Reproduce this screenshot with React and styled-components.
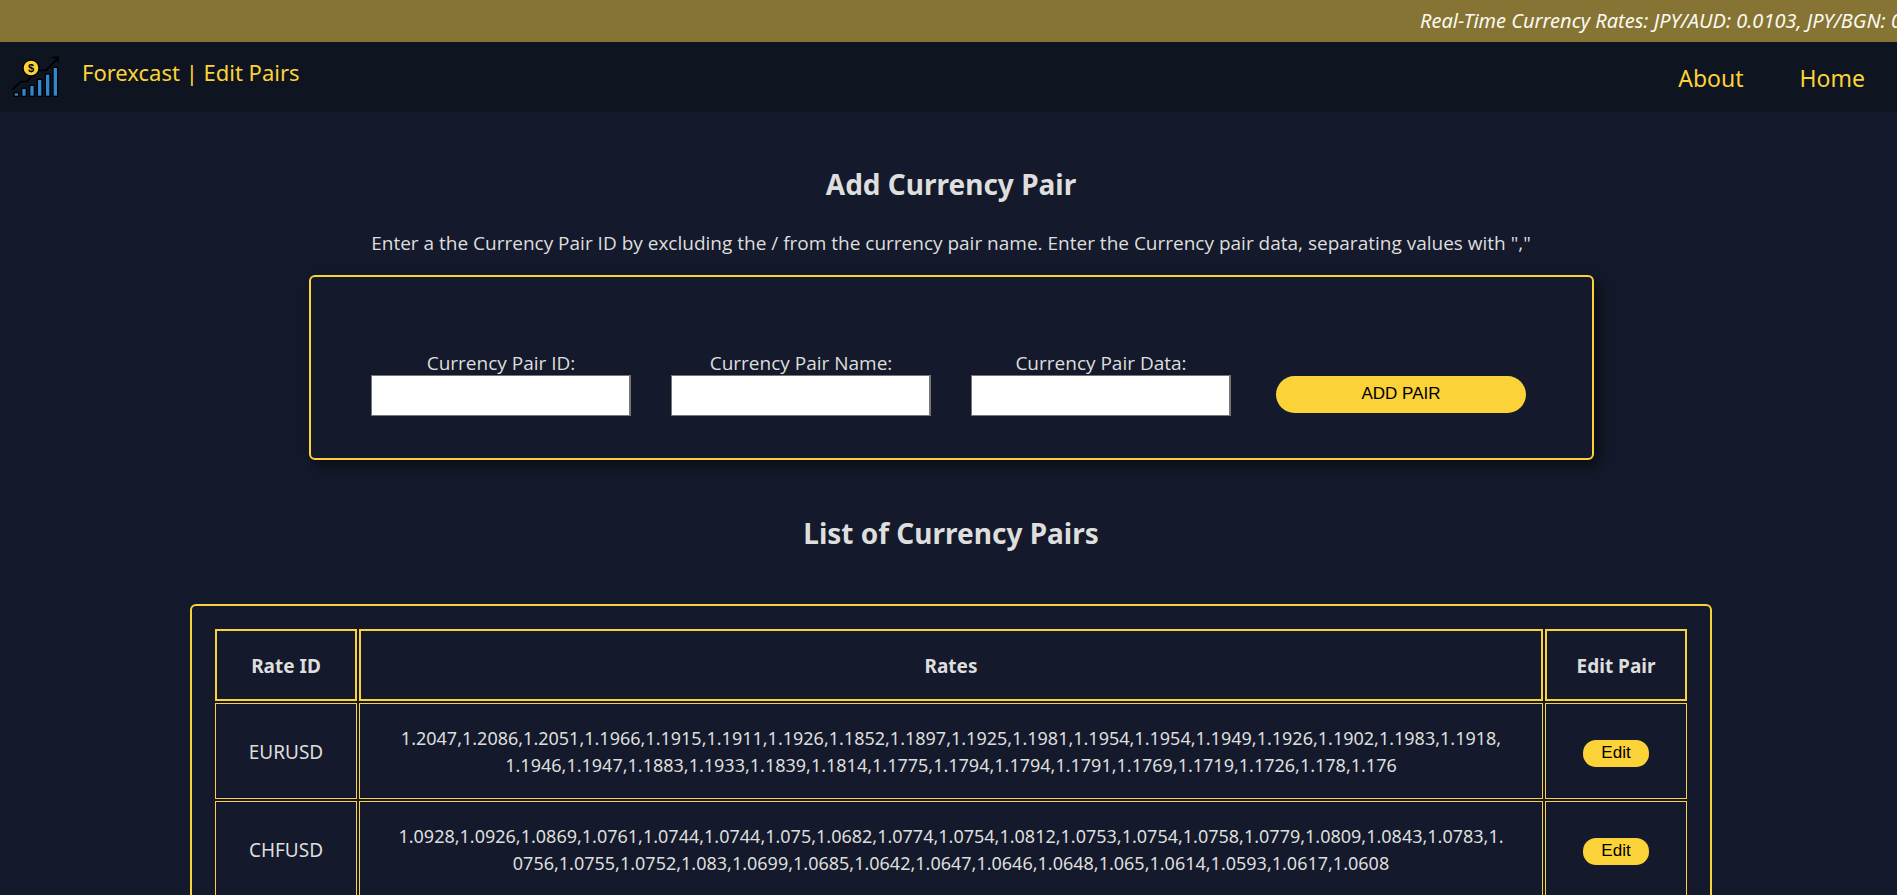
import React from "react";
import styled, { createGlobalStyle, ThemeProvider } from "styled-components";

const theme = {
  page: "#141a2b",
  bar: "#0e1420",
  ticker: "#857433",
  accent: "#fbd339",
  text: "#dedede",
  sans: '"Noto Sans", "Open Sans", sans-serif',
  copy: '"Open Sans", "Noto Sans", sans-serif',
  control: '"Liberation Sans", Arial, sans-serif',
};

const GlobalStyle = createGlobalStyle`
  * { box-sizing: border-box; }
  body {
    margin: 0;
    overflow-x: hidden;
    background: ${theme.page};
    color: ${theme.text};
    font: 19px/27px ${theme.sans};
  }
`;

const Ticker = styled.div`
  display: flex;
  justify-content: flex-end;
  height: 42px;
  overflow: hidden;
  background: ${(p) => p.theme.ticker};
`;

const TickerText = styled.span`
  flex: none;
  width: 477px;
  color: #fbf9f0;
  font-size: 20px;
  font-style: italic;
  line-height: 42px;
  white-space: nowrap;
`;

const NavBar = styled.header`
  display: flex;
  justify-content: space-between;
  height: 70px;
  padding: 14px 32px 0 12px;
  background: ${(p) => p.theme.bar};
  color: ${(p) => p.theme.accent};
  font-size: 22px;
  line-height: 32px;
`;

const Brand = styled.div`
  display: flex;
  align-items: flex-start;
  gap: 22px;
`;

const Logo = styled.svg`
  width: 48px;
  height: 42px;
`;

const NavLinks = styled.nav`
  display: flex;
  gap: 56px;
  padding-top: 6px;
  font-size: 23px;
`;

const NavLink = styled.a`
  color: inherit;
  text-decoration: none;
`;

const Main = styled.main`
  padding-left: 5px;
  text-align: center;
`;

const Heading = styled.h2`
  margin: 0;
  padding-top: 52px;
  font-size: 28px;
  line-height: 40px;
`;

const Hint = styled.p`
  margin: 26px 0 18px;
  font-family: ${(p) => p.theme.copy};
`;

const PairForm = styled.form`
  display: flex;
  align-items: flex-end;
  gap: 40px;
  height: 185px;
  margin: 0 303px 1px 304px;
  padding: 0 66px 42px 60px;
  border: 2px solid ${(p) => p.theme.accent};
  border-radius: 6px;
  box-shadow: 5px 5px 15px rgba(0, 0, 0, 0.6);
`;

const Field = styled.label`
  display: flex;
  flex: 1;
  flex-direction: column;
  font-family: ${(p) => p.theme.copy};
  line-height: 24px;
`;

const TextBox = styled.input`
  width: 100%;
  height: 41px;
  border: 1px solid #767676;
  border-right-width: 2px;
  border-radius: 0;
  background: #fff;
  font: 17px ${(p) => p.theme.control};
`;

const Button = styled.button`
  padding: 0 0 1px;
  border: 0;
  background: ${(p) => p.theme.accent};
  color: #000;
  font: 17px ${(p) => p.theme.control};
`;

const AddButton = styled(Button)`
  width: 250px;
  height: 37px;
  margin: 0 0 3px 5px;
  border-radius: 19px;
`;

const EditButton = styled(Button)`
  width: 66px;
  height: 27px;
  border-radius: 13px;
`;

const Panel = styled.section`
  margin: 51px 185px 40px;
  padding: 21px;
  border: 2px solid ${(p) => p.theme.accent};
  border-radius: 6px;
`;

const Table = styled.table`
  width: 100%;
  border-collapse: separate;
  border-spacing: 2px;
  table-layout: fixed;
`;

const HeadCell = styled.th`
  width: ${(p) => (p.$narrow ? "142px" : "auto")};
  padding: 21px 20px 19px;
  border: 2px solid ${(p) => p.theme.accent};
  line-height: 28px;
`;

const Cell = styled.td`
  padding: 21px 20px 19px;
  border: 1px solid ${(p) => p.theme.accent};
`;

const RatesCell = styled(Cell)`
  padding-left: 37px;
  padding-right: 37px;
  font-size: 18px;
  word-break: break-all;
`;

const bars = [
  [42, 128],
  [65, 115],
  [89, 106],
  [112, 88],
  [136, 72],
  [159, 52],
];

const fields = ["Currency Pair ID:", "Currency Pair Name:", "Currency Pair Data:"];

const pairs = [
  {
    id: "EURUSD",
    rates:
      "1.2047,1.2086,1.2051,1.1966,1.1915,1.1911,1.1926,1.1852,1.1897,1.1925,1.1981,1.1954,1.1954,1.1949,1.1926,1.1902,1.1983,1.1918,1.1946,1.1947,1.1883,1.1933,1.1839,1.1814,1.1775,1.1794,1.1794,1.1791,1.1769,1.1719,1.1726,1.178,1.176",
  },
  {
    id: "CHFUSD",
    rates:
      "1.0928,1.0926,1.0869,1.0761,1.0744,1.0744,1.075,1.0682,1.0774,1.0754,1.0812,1.0753,1.0754,1.0758,1.0779,1.0809,1.0843,1.0783,1.0756,1.0755,1.0752,1.083,1.0699,1.0685,1.0642,1.0647,1.0646,1.0648,1.065,1.0614,1.0593,1.0617,1.0608",
  },
];

function ChartLogo() {
  return (
    <Logo viewBox="36 18 144 126" aria-hidden="true">
      <path
        d="M38 118 62 95H80L95 80M116 61H138L173 25M157 22H174V39"
        fill="none"
        stroke="#000"
        strokeWidth="5"
      />
      {bars.map(([x, top]) => (
        <rect
          key={x}
          x={x}
          y={top}
          width="14"
          height={139 - top}
          fill="#2f87d0"
          stroke="#000"
          strokeWidth="4"
        />
      ))}
      <circle cx="93" cy="54" r="24" fill={theme.accent} stroke="#000" strokeWidth="4" />
      <text x="93" y="65" textAnchor="middle" fontFamily="Liberation Sans, sans-serif" fontWeight="700" fontSize="33">
        $
      </text>
    </Logo>
  );
}

export default function App() {
  return (
    <ThemeProvider theme={theme}>
      <GlobalStyle />
      <Ticker>
        <TickerText>Real-Time Currency Rates: JPY/AUD: 0.0103, JPY/BGN: 0</TickerText>
      </Ticker>
      <NavBar>
        <Brand>
          <ChartLogo />
          <span>Forexcast | Edit Pairs</span>
        </Brand>
        <NavLinks>
          <NavLink href="#about">About</NavLink>
          <NavLink href="#home">Home</NavLink>
        </NavLinks>
      </NavBar>
      <Main>
        <Heading>Add Currency Pair</Heading>
        <Hint>
          Enter a the Currency Pair ID by excluding the / from the currency pair name. Enter the
          Currency pair data, separating values with ","
        </Hint>
        <PairForm onSubmit={(e) => e.preventDefault()}>
          {fields.map((label) => (
            <Field key={label}>
              {label}
              <TextBox type="text" />
            </Field>
          ))}
          <AddButton type="submit">ADD PAIR</AddButton>
        </PairForm>
        <Heading>List of Currency Pairs</Heading>
        <Panel>
          <Table>
            <thead>
              <tr>
                <HeadCell $narrow>Rate ID</HeadCell>
                <HeadCell>Rates</HeadCell>
                <HeadCell $narrow>Edit Pair</HeadCell>
              </tr>
            </thead>
            <tbody>
              {pairs.map((pair) => (
                <tr key={pair.id}>
                  <Cell>{pair.id}</Cell>
                  <RatesCell>{pair.rates}</RatesCell>
                  <Cell>
                    <EditButton type="button">Edit</EditButton>
                  </Cell>
                </tr>
              ))}
            </tbody>
          </Table>
        </Panel>
      </Main>
    </ThemeProvider>
  );
}
